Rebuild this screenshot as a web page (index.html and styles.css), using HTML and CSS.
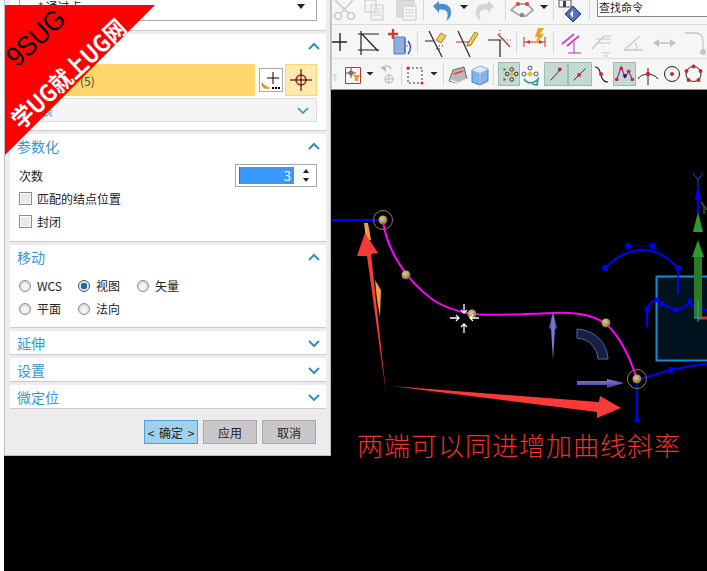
FILE: index.html
```html
<!DOCTYPE html>
<html lang="zh">
<head>
<meta charset="utf-8">
<title>艺术样条</title>
<link rel="stylesheet" href="styles.css">
</head>
<body>
<div class="app">
  <div class="edge"></div>
  <div class="dialog">
    <section class="sec sec-top">
      <div class="combo"><span class="star">*</span><span>通过点</span><i class="caret"></i></div>
    </section>
    <section class="sec sec-points">
      <div class="head"><span class="title"></span><svg class="chev" viewBox="0 0 12 8"><path d="M1 7 6 2l5 5"/></svg></div>
      <div class="pick">
        <div class="pick-bar"><span class="pick-count">(5)</span></div>
        <div class="pick-add">
          <svg width="22" height="22" viewBox="0 0 22 22"><path d="M13 3v12M7 9h12" stroke="#000" fill="none"/><path d="M2 14c1 4 3 5 7 5" stroke="#ec8a1e" stroke-width="2" fill="none"/><path d="M2 17l3 3 1-4z" fill="#ec8a1e"/><path d="M12 18h2v2h-2zM15 18h2v2h-2zM18 18h2v2h-2z"/></svg>
        </div>
        <div class="pick-target">
          <svg width="22" height="22" viewBox="0 0 22 22"><circle cx="11" cy="11" r="5" fill="none" stroke="#d01010" stroke-width="1.4"/><path d="M0 11h22M11 0v22" stroke="#000" fill="none"/></svg>
        </div>
      </div>
      <div class="sublist"><span class="sublist-text">列表</span><svg class="chev small" viewBox="0 0 12 8"><path d="M1 2l5 5 5-5"/></svg></div>
    </section>
    <section class="sec sec-param">
      <div class="head"><span class="title">参数化</span><svg class="chev" viewBox="0 0 12 8"><path d="M1 7 6 2l5 5"/></svg></div>
      <div class="spin-row">
        <span>次数</span>
        <div class="spin"><span class="spin-val">3</span><span class="spin-arrows"><i class="up"></i><i class="down"></i></span></div>
      </div>
      <label class="check"><i class="box"></i>匹配的结点位置</label>
      <label class="check"><i class="box"></i>封闭</label>
    </section>
    <section class="sec sec-move">
      <div class="head"><span class="title">移动</span><svg class="chev" viewBox="0 0 12 8"><path d="M1 7 6 2l5 5"/></svg></div>
      <div class="radios">
        <label class="radio"><i class="dot"></i>WCS</label>
        <label class="radio"><i class="dot on"></i>视图</label>
        <label class="radio"><i class="dot"></i>矢量</label>
        <label class="radio"><i class="dot"></i>平面</label>
        <label class="radio"><i class="dot"></i>法向</label>
      </div>
    </section>
    <section class="sec sec-fold"><div class="head"><span class="title">延伸</span><svg class="chev" viewBox="0 0 12 8"><path d="M1 2l5 5 5-5"/></svg></div></section>
    <section class="sec sec-fold"><div class="head"><span class="title">设置</span><svg class="chev" viewBox="0 0 12 8"><path d="M1 2l5 5 5-5"/></svg></div></section>
    <section class="sec sec-fold"><div class="head"><span class="title">微定位</span><svg class="chev" viewBox="0 0 12 8"><path d="M1 2l5 5 5-5"/></svg></div></section>
    <footer class="actions">
      <button class="btn primary">&lt; 确定 &gt;</button>
      <button class="btn">应用</button>
      <button class="btn">取消</button>
    </footer>
  </div>

  <div class="right">
    <div class="toolbar">
      <div class="row row1">
        <svg width="32" height="24" viewBox="0 0 32 24"><path d="M21 0 9 13M3 0l13 13" fill="none" stroke="#d0d0d0" stroke-width="1.8"/><circle cx="6" cy="16" r="3.500" fill="none" stroke="#c8c8c8" stroke-width="1.600"/><circle cx="19" cy="16" r="3.500" fill="none" stroke="#c8c8c8" stroke-width="1.600"/></svg>
        <svg width="32" height="24" viewBox="0 0 32 24"><path d="M1 0h11v12H1zM7 5h12v15H7z" fill="#f4f4f4" stroke="#c8c8c8"/><path d="M9 9h8M9 12h8M9 15h8" stroke="#d0d0d0"/></svg>
        <svg width="27" height="24" viewBox="0 0 27 24"><path d="M1 0h17v17H1z" fill="#ddd" stroke="#c8c8c8"/><path d="M7 6h13v14H7z" fill="#f6f6f6" stroke="#c8c8c8"/><path d="M9 10h9M9 13h9M9 16h9" stroke="#d0d0d0"/></svg>
        <i class="sep"></i>
        <svg width="31" height="24" viewBox="-4 0 31 24"><path d="M1 6 7 1v3c8-1 13 3 12 10-.4 3-2 5-5 7 2-4 2-7 1-9-1-2-4-3-8-2v3z" fill="#4a8ed6"/></svg>
        <svg width="16" height="24" viewBox="0 0 16 24"><path d="M1 5h8l-4 4z" fill="#222"/></svg>
        <svg width="30" height="24" viewBox="0 0 30 24"><path d="M19 6 13 1v3C5 3 0 7 1 14c.4 3 2 5 5 7-2-4-2-7-1-9 1-2 4-3 8-2v3z" fill="#d4d4d4"/></svg>
        <i class="sep"></i>
        <svg width="29" height="24" viewBox="0 0 29 24"><path d="M1 10 8 4l9 0 6 6-7 6-5 0z" fill="none" stroke="#a8a8a8" stroke-width="1.800"/><circle cx="8" cy="4" r="2" fill="#d8453a"/><circle cx="17" cy="4" r="2" fill="#d8453a"/><circle cx="12" cy="15" r="2.200" fill="#888"/></svg>
        <svg width="14" height="24" viewBox="0 0 14 24"><path d="M1 5h8l-4 4z" fill="#222"/></svg>
        <i class="sep"></i>
        <svg width="31" height="24" viewBox="0 0 31 24"><path d="M1 0h12v7H1z" fill="#fff" stroke="#555"/><path d="M5 1h3v6H5z" fill="#2a3f80"/><path d="M15 6l8 8-8 8-8-8z" fill="#5a70b8" stroke="#26356e"/><path d="M15 10v8l-3-4z" fill="#fff"/></svg>
        <i class="sep"></i>
        <div class="search"><span>查找命令</span></div>
      </div>
      <div class="row row2">
        <svg width="26" height="34" viewBox="0 0 26 34"><path d="M0 17h15M8 8v18" stroke="#222" fill="none" stroke-width="1.4"/></svg>
        <svg width="30" height="34" viewBox="0 0 30 34"><path d="M0 9h21M0 25h21M3 6v24M4 9l16 17" stroke="#222" fill="none" stroke-width="1.2"/></svg>
        <svg width="29" height="34" viewBox="0 0 29 34"><path d="M0 9h10M5 4v10" stroke="#d23b2e" stroke-width="2.4" fill="none"/><path d="M6 12h11v17H6z" fill="#8fb0dc" stroke="#5c7fb5"/><path d="M17 13v15" stroke="#3456a0"/><path d="M20 16c3 4 3 9 0 13" stroke="#2b3fd0" fill="none" stroke-width="1.4"/><path d="M17 21h3" stroke="#e88b2c" stroke-width="1.6"/></svg>
        <i class="sep"></i>
        <svg width="34" height="34" viewBox="-2 0 34 34"><path d="M1 16h9l8 16M5 6l12 24" stroke="#222" fill="none" stroke-width="1.2"/><path d="M12 15l5-7 5 3-5 7z" fill="#f0c860" stroke="#b08030"/><path d="M12 21h9M12 24h5" stroke="#222" stroke-dasharray="1 2" fill="none"/></svg>
        <svg width="31" height="34" viewBox="0 0 31 34"><path d="M0 17h11" stroke="#d03030"/><path d="M11 17h5M2 6l12 26" stroke="#222" fill="none" stroke-width="1.2"/><path d="M12 18l7-11 3 2-7 11-4 1z" fill="#f0d040" stroke="#a07820"/></svg>
        <svg width="29" height="34" viewBox="0 0 29 34"><path d="M1 15h12M13 15v17" stroke="#222" stroke-width="1.2" fill="none"/><path d="M11 9l12 13" stroke="#d82828" stroke-width="1.2"/><path d="M13 5v10M14 15h10" stroke="#666" stroke-dasharray="1 2" fill="none"/></svg>
        <i class="sep"></i>
        <svg width="32" height="34" viewBox="-2 0 32 34"><path d="M1 12v10M22 12v10M1 17h21" stroke="#d03028" fill="none"/><path d="M3 17l4-2v4zM20 17l-4-2v4z" fill="#d03028"/><path d="M15 3h6l-4 6h4l-9 11 3-8h-3z" fill="#f0a020"/></svg>
        <i class="sep"></i>
        <svg width="32" height="34" viewBox="0 0 32 34"><path d="M4 19 16 9M9 21 21 11" stroke="#c848c0" stroke-width="1.8" fill="none"/><path d="M10 28h13M16 17v11" stroke="#a838b0" fill="none"/></svg>
        <svg width="33" height="34" viewBox="0 0 33 34"><path d="M2 24 14 11h8M6 14h15M9 18h12" stroke="#c4c4c4" stroke-width="1.2" fill="none"/><path d="M12 28h8M14 31h4" stroke="#c4c4c4"/></svg>
        <svg width="30" height="34" viewBox="0 0 30 34"><path d="M1 25h19M1 25 17 11M12 18c2 2 2 4 2 7" stroke="#c8c8c8" stroke-width="1.3" fill="none"/></svg>
        <svg width="32" height="34" viewBox="0 0 32 34"><path d="M1 18h21" stroke="#c4c4c4" stroke-width="1.6"/><path d="M0 18l6-4v8zM23 18l-6-4v8z" fill="#c4c4c4"/></svg>
        <svg width="21" height="34" viewBox="0 0 21 34"><path d="M0 8h10c5 0 8 3 8 8v11" stroke="#c4c4c4" stroke-width="1.3" fill="none"/><circle cx="18" cy="27" r="3" fill="#c4c4c4"/></svg>
      </div>
      <div class="row row3">
        <svg width="13" height="30" viewBox="0 0 13 30"><path d="M0 15h5l-1 4v3h-2v-3z" fill="#ddd"/></svg>
        <svg width="20" height="30" viewBox="0 0 20 30"><path d="M.5 8.500h15v16h-15z" fill="none" stroke="#c83030"/><circle cx="6" cy="14" r="2" fill="none" stroke="#c83030"/><path d="M1 14h10M6 9v10" stroke="#333" stroke-width=".8"/><path d="M8 16h7l-2 3v3h-3v-3z" fill="#e8a020"/></svg>
        <svg width="15" height="30" viewBox="2.500 0 15 30"><path d="M4 13h7l-3.500 3.500z" fill="#222"/></svg>
        <svg width="21" height="30" viewBox="3 0 21 30"><path d="M5 9a5 5 0 0 1 9 1" stroke="#bbb" stroke-width="1.4" fill="none"/><path d="M3 8h6v5z" fill="#bbb"/><circle cx="12" cy="20" r="4" fill="none" stroke="#bbb"/><path d="M7 20h10M12 15v10" stroke="#bbb"/></svg>
        <i class="sep"></i>
        <svg width="25" height="30" viewBox="-1 0 25 30"><path d="M1 9h14v15H1z" fill="none" stroke="#333" stroke-dasharray="2 2"/><circle cx="1" cy="9" r="1.500" fill="#d02828"/><circle cx="15" cy="24" r="1.500" fill="#d02828"/></svg>
        <svg width="12" height="30" viewBox="1.500 0 12 30"><path d="M1 13h7l-3.500 3.500z" fill="#222"/></svg>
        <i class="sep"></i>
        <svg width="23" height="30" viewBox="0 0 23 30"><path d="M1 22 5 11l11-3 3 12-10 4z" fill="#b9b9b9" stroke="#666"/><path d="M6 15l9-3" stroke="#e04040" stroke-width="1.4"/><path d="M2 21l8 3 9-4" fill="none" stroke="#eee" stroke-width="1.5"/></svg>
        <svg width="22" height="30" viewBox="0 0 22 30"><path d="M1 11 9 7l8 3v12l-8 4-8-3z" fill="#7cb4ee" stroke="#4a80c0"/><path d="M1 11l8 3 8-4M9 14v12" stroke="#e8b0c0" fill="none"/><path d="M1 11 9 7l8 3-8 4z" fill="#d8eafc"/></svg>
        <i class="sep"></i>
        <svg class="tog" width="22" height="24" viewBox="0 0 22 24"><path d="M5 5v4l3-2z" fill="#18a018"/><path d="M5 16v4l3-2z" fill="#d83030"/><circle cx="14" cy="7" r="2" fill="none" stroke="#222"/><circle cx="14" cy="18" r="2" fill="none" stroke="#222"/><circle cx="9" cy="12" r="2" fill="none" stroke="#222"/><circle cx="19" cy="12" r="2" fill="none" stroke="#222"/><path d="M14 9l3 3-3 3-3-3z" fill="#e8c020"/></svg>
        <svg width="24" height="30" viewBox="1 0 24 30"><circle cx="11" cy="9" r="2" fill="none" stroke="#555"/><circle cx="5" cy="15" r="2" fill="none" stroke="#555"/><circle cx="17" cy="15" r="2" fill="none" stroke="#555"/><path d="M11 12l3 3-3 3-3-3z" fill="#e8c020"/><path d="M5 20c3 5 10 5 14 0l-1 6-5-1" stroke="#2a9a9a" stroke-width="1.6" fill="none"/></svg>
        <svg class="tog" width="24" height="24" viewBox="0 0 24 24"><path d="M6 19 18 6" stroke="#222"/><circle cx="16" cy="7" r="2" fill="#d02828"/></svg>
        <svg class="tog" width="24" height="24" viewBox="0 0 24 24"><path d="M5 19 18 6" stroke="#222"/><circle cx="11" cy="13" r="2" fill="#d02828"/></svg>
        <svg width="21" height="30" viewBox="-2 0 21 30"><path d="M1 8c8 0 3 15 13 15" stroke="#222" stroke-width="1.200" fill="none"/><circle cx="7" cy="15" r="2" fill="#d02828"/></svg>
        <svg class="tog" width="23" height="24" viewBox="0 0 23 24"><path d="M3 18 8 4l4 12 4-7 4 9" stroke="#a030c0" stroke-width="1.400" fill="none"/><circle cx="3" cy="18" r="2" fill="#d02828"/><circle cx="8" cy="6" r="2" fill="#d02828"/><circle cx="12" cy="14" r="2" fill="#222"/><circle cx="16" cy="9" r="2" fill="#d02828"/><circle cx="20" cy="18" r="2" fill="#d02828"/></svg>
        <svg width="24" height="30" viewBox="-2 0 24 30"><path d="M0 20c3-6 15-7 20 0M10 9v17" stroke="#222" fill="none"/><circle cx="10" cy="15" r="2.200" fill="#d02828"/></svg>
        <svg width="22" height="30" viewBox="-3 0 22 30"><circle cx="9" cy="15" r="7.500" fill="none" stroke="#222"/><circle cx="9" cy="15" r="2" fill="#d02828"/></svg>
        <svg width="25" height="30" viewBox="-1.500 0 25 30"><circle cx="10" cy="15" r="7.500" fill="none" stroke="#222"/><circle cx="10" cy="7.500" r="2" fill="#d02828"/><circle cx="3" cy="12" r="2" fill="#d02828"/><circle cx="17" cy="12" r="2" fill="#d02828"/><circle cx="5" cy="21" r="2" fill="#d02828"/><circle cx="15" cy="21" r="2" fill="#d02828"/></svg>
      </div>
    </div>
    <div class="canvas">
      <svg class="scene" width="376" height="481" viewBox="331 90 376 481">
        <defs>
          <radialGradient id="ball" cx=".4" cy=".35" r=".7"><stop offset="0" stop-color="#dccb8c"/><stop offset=".6" stop-color="#a8975c"/><stop offset="1" stop-color="#5e5430"/></radialGradient>
          <linearGradient id="peri" x1="0" y1="0" x2="1" y2="0"><stop offset="0" stop-color="#4040a0"/><stop offset=".5" stop-color="#8080e0"/><stop offset="1" stop-color="#4040a0"/></linearGradient>
          <linearGradient id="peri2" x1="0" y1="0" x2="0" y2="1"><stop offset="0" stop-color="#8080e0"/><stop offset="1" stop-color="#3c3c90"/></linearGradient>
        </defs>
        <path d="M656.500 276.500H709V360.500H656.500Z" fill="#02121f" stroke="#0f8fd8" stroke-width="2"/>
        <path d="M331 220H383" stroke="#0000ff" stroke-width="2"/>
        <path d="M637 380 671 370C685 367 695 365 707 364M637 380V420" stroke="#0000ff" stroke-width="2" fill="none"/>
        <circle cx="671" cy="370" r="3" fill="#0000ff"/><circle cx="637" cy="420" r="2.500" fill="#0000ff"/>
        <path d="M605 268C630 244 655 244 678 268V294M647 327V309C650 302 654 300 657 300L662 304 675 310C682 310 688 305 690 301L693 308 707 310" stroke="#0000ff" stroke-width="2" fill="none"/>
        <path d="M605 268 628 246H653L678 268" stroke="#0000ff" stroke-dasharray="2 2" fill="none"/>
        <g fill="#0000ff"><circle cx="605" cy="268" r="3"/><circle cx="628" cy="246" r="3"/><circle cx="653" cy="246" r="3"/><circle cx="678" cy="268" r="3"/><circle cx="647" cy="309" r="2.500"/><circle cx="657" cy="300" r="2.500"/><circle cx="662" cy="304" r="2.500"/><circle cx="675" cy="310" r="2.500"/><circle cx="690" cy="301" r="2.500"/></g>
        <path d="M698 183 701 200H699V214H697V200H695Z" fill="#0000ff"/>
        <path d="M693 173 698 180 703 173M698 180V186" stroke="#1a40d0" fill="none"/>
        <path d="M694 257H702V318H694Z" fill="#2a7a2a"/>
        <path d="M698 212 703 232H693ZM698 240 704 257H692Z" fill="#2f9a2f"/>
        <path d="M701 202 707 210M704 206V214" stroke="#2f9a2f" fill="none"/>
        <path d="M698 318H707" stroke="#c83030" stroke-width="3"/>
        <path d="M698 300V322M694 318H702" stroke="#2aa8a8"/>
        <path d="M383 222C388 252 406 280 433 300C447 309 460 312 472 314C490 316 530 314 553 313C572 312 592 314 606 324C620 336 630 358 637 379" stroke="#ff00ff" stroke-width="2" fill="none"/>
        <path d="M553 312 557 328 555 329 553 360 551 329 549 328Z" fill="url(#peri)"/>
        <path d="M577 381H607V379L624 383 607 388V385H577Z" fill="url(#peri2)"/>
        <path d="M577 329V338C590 339 597 348 598 359H608C607 342 594 330 577 329Z" fill="#16203f" stroke="#5a63b0"/>
        <path d="M364 223H368L371 240 366 240ZM375 280 381 290 380 317 377 300Z" fill="#f0a040"/>
        <path d="M365 233 378 253 371 254 386 393 367 256 357 256Z" fill="#f93a36"/>
        <path d="M391 386 599 402 600 396 621 408 597 418 597 412Z" fill="#f93a36"/>
        <circle cx="383" cy="220" r="9.500" fill="none" stroke="#8f7f3f"/>
        <circle cx="637" cy="379" r="9.500" fill="none" stroke="#8f7f3f"/>
        <circle cx="383" cy="220" r="4.500" fill="url(#ball)"/>
        <circle cx="406" cy="275" r="4.500" fill="url(#ball)"/>
        <circle cx="472" cy="314" r="4.500" fill="url(#ball)"/>
        <circle cx="606" cy="323" r="4.500" fill="url(#ball)"/>
        <circle cx="637" cy="379" r="4.500" fill="url(#ball)"/>
        <path d="M464 304V313M461 310 464 313 467 310M464 333V324M461 327 464 324 467 327M450 318H459M456 315 459 318 456 321M479 318H470M473 315 470 318 473 321" stroke="#fff" stroke-width="1.300" fill="none"/>
      </svg>
      <p class="note">两端可以同进增加曲线斜率</p>
    </div>
  </div>

  <div class="watermark">
    <span class="wm-a">9SUG</span>
    <span class="wm-b">学UG就上UG网</span>
  </div>
</div>
</body>
</html>
```
FILE: styles.css
```css
* { box-sizing: border-box; }
html, body { margin: 0; padding: 0; }
body { font-family: "Noto Sans CJK SC", "Liberation Sans", sans-serif; font-size: 12px; color: #222; background: #000; }
.app { position: relative; display: flex; width: 707px; height: 571px; overflow: hidden; background: #000; }
.edge { flex: 0 0 4px; background: #fff; }

.dialog { flex: 0 0 327px; height: 456px; display: flex; flex-direction: column; gap: 3px; padding: 0 4px 0 5px; background: #eeebee; border: 1px solid #bdbbbd; border-width: 0 1px 1px 1px; overflow: hidden; }
.sec { background: #fff; border-bottom: 1px solid #cdcbcd; flex: none; padding: 0 9px; }
.sec-top { height: 31px; }
.sec-points { height: 97px; }
.sec-param { height: 108px; }
.sec-move { height: 83px; }
.sec-fold { height: 24px; }
.head { display: flex; justify-content: space-between; align-items: center; height: 24px; margin: 0 -3px 0 -2px; }
.title { font-size: 14px; color: #3a96c8; line-height: 1; }
.chev { width: 12px; height: 8px; fill: none; stroke: #2f8fc0; stroke-width: 2; }
.chev.small { stroke-width: 1.600; }

.combo { display: flex; align-items: center; gap: 2px; height: 30px; margin-top: -9px; padding: 0 11px 0 18px; border: 1px solid #aaa; }
.star { color: #d02020; }
.caret { margin-left: auto; width: 0; height: 0; border: 4px solid transparent; border-top: 5px solid #222; border-bottom: 0; }

.pick { display: flex; height: 32px; margin: 6px 0 2px -9px; align-items: center; }
.pick-bar { flex: 0 0 245px; height: 32px; background: #ffd66e; display: flex; align-items: center; padding-left: 70px; font-size: 12px; color: #444; }
.pick-add { flex: 0 0 24px; height: 24px; margin-left: 4px; border: 1px solid #aaa; background: #fff; display: flex; align-items: center; justify-content: center; }
.pick-target { flex: 0 0 32px; height: 32px; margin-left: 2px; background: #ffe9ae; border: 1px solid #ffd66e; display: flex; align-items: center; justify-content: center; }
.sublist { display: flex; justify-content: space-between; align-items: center; height: 24px; padding: 0 7px 0 9px; background: #f5f5f5; border: 1px solid #ddd; }
.sublist-text { color: #3a96c8; }

.spin-row { display: flex; align-items: center; justify-content: space-between; height: 23px; margin-top: 6px; }
.spin { width: 82px; height: 23px; border: 1px solid #aaa; display: flex; align-items: center; padding-left: 3px; }
.spin-val { width: 55px; height: 17px; background: #3b99fc; color: #fff; text-align: right; padding-right: 3px; line-height: 17px; font-size: 13px; border-left: 1px solid #a05a20; }
.spin-arrows { display: flex; flex-direction: column; gap: 5px; margin-left: 9px; }
.up, .down { display: block; width: 0; height: 0; border: 3px solid transparent; }
.up { border-bottom: 4px solid #222; border-top: 0; }
.down { border-top: 4px solid #222; border-bottom: 0; }
.check { display: flex; align-items: center; gap: 5px; height: 23px; line-height: 1; }
.box { flex: none; width: 13px; height: 13px; border: 1px solid #8a8a8a; background: #e9e9e9; box-shadow: inset 0 0 0 1px #fff; }

.radios { display: grid; grid-template-columns: 59px 59px 59px; grid-auto-rows: 23px; margin-top: 5px; }
.radio { display: flex; align-items: center; gap: 6px; line-height: 1; }
.dot { flex: none; width: 12px; height: 12px; border-radius: 50%; border: 1px solid #8d8d8d; background: radial-gradient(circle at 50% 60%, #f4f4f4 30%, #c4c4c4 100%); }
.dot.on { background: radial-gradient(circle, #0f6fb0 0 3px, #e4e4e4 3.500px); border-color: #555; }

.actions { display: flex; justify-content: flex-end; gap: 5px; padding: 8px 10px 0 0; }
.btn { width: 54px; height: 24px; padding: 0; font: inherit; color: #222; background: #c9c7ca; border: 1px solid #a9a7aa; }
.btn.primary { background: #9fd0ec; border-color: #4aa3d8; word-spacing: 2px; }

.right { flex: 1; display: flex; flex-direction: column; min-width: 0; }
.toolbar { flex: 0 0 90px; background: #f6f6f6; border-left: 1px solid #c8c8c8; border-bottom: 1px solid #8f8f8f; display: flex; flex-direction: column; }
.row { display: flex; align-items: center; overflow: hidden; flex: none; }
.row svg { flex: none; display: block; }
.row1 { height: 25px; border-bottom: 1px solid #dcdcdc; align-items: flex-start; }
.row2 { height: 34px; border-bottom: 1px solid #dcdcdc; }
.row3 { height: 30px; }
.sep { flex: none; width: 1px; height: 22px; background: #d6d6d6; margin-right: 4px; }
.row1 .sep { height: 20px; }
.tog { background: #c3d9d2; border: 1px solid #9cbdb2; }
.search { flex: 1; height: 17px; margin-left: 3px; padding-left: 1px; background: #fff; border: 1px solid #888; border-top: 0; border-right: 0; font-size: 11px; line-height: 14px; white-space: nowrap; overflow: hidden; }

.canvas { flex: 1; position: relative; background: #000; }
.scene { display: block; }
.note { position: absolute; left: 26px; top: 338px; margin: 0; color: #f03028; font-size: 26px; font-weight: 300; letter-spacing: 1px; line-height: 34px; white-space: nowrap; }

.watermark { position: absolute; left: 5px; top: 5px; width: 150px; height: 150px; background: #fe0000; clip-path: polygon(0 0, 100% 0, 0 100%); }
.wm-a, .wm-b { position: absolute; white-space: nowrap; line-height: 1; }
.wm-a { left: 31px; top: 33px; font-size: 28px; color: #000; font-family: "Liberation Sans", sans-serif; transform: translate(-50%, -50%) rotate(-43deg) scaleX(.9); }
.wm-b { left: 63px; top: 68px; font-size: 24px; font-weight: 700; color: #fff; transform: translate(-50%, -50%) rotate(-43deg) scaleX(.88); }
```
